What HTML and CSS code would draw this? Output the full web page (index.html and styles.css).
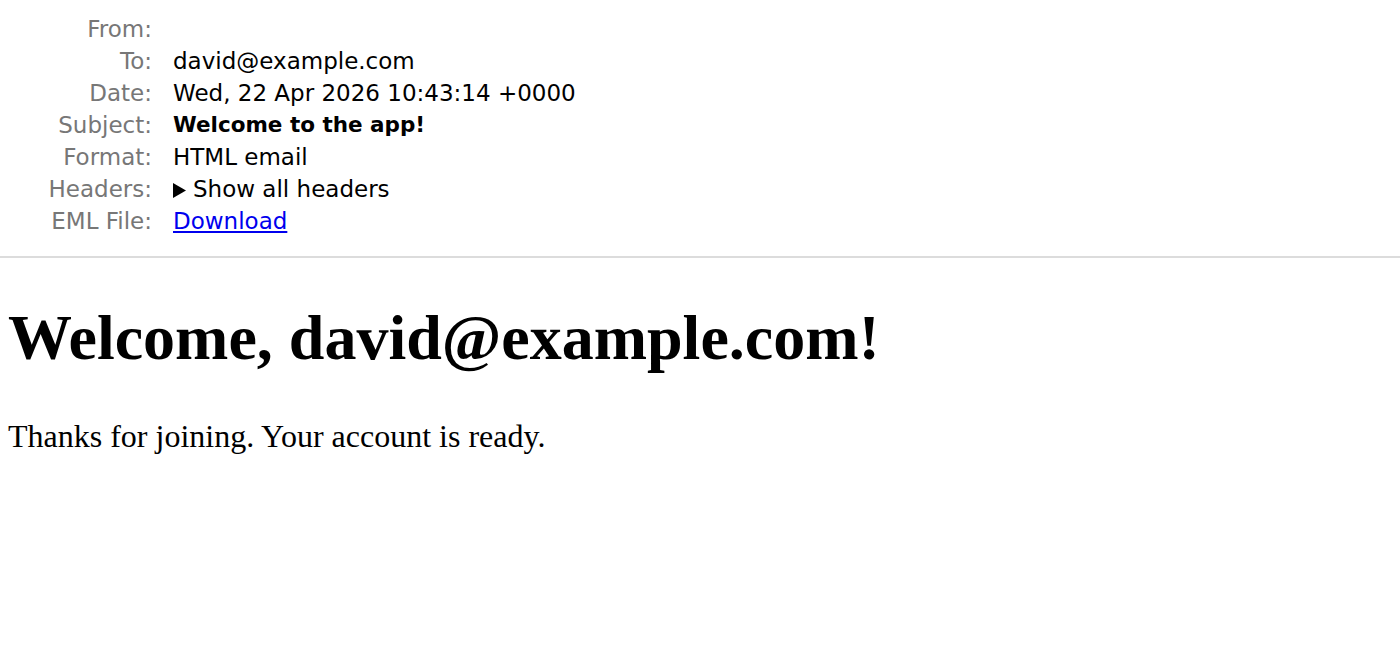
FILE: index.html
```html
<!DOCTYPE html>
<html>
<head>
<meta charset="utf-8">
<link rel="stylesheet" href="styles.css">
</head>
<body>
<header class="meta">
  <dl class="fields">
    <dt>From:</dt><dd></dd>
    <dt>To:</dt><dd>david@example.com</dd>
    <dt>Date:</dt><dd>Wed, 22 Apr 2026 10:43:14 +0000</dd>
    <dt>Subject:</dt><dd class="subject">Welcome to the app!</dd>
    <dt>Format:</dt><dd>HTML email</dd>
    <dt>Headers:</dt><dd><svg class="tri" width="13" height="15" viewBox="0 0 13 15"><polygon points="0,0 13,7.5 0,15" fill="#000"/></svg>Show all headers</dd>
    <dt>EML File:</dt><dd><a href="#" class="link">Download</a></dd>
  </dl>
</header>
<main class="content">
  <h1 class="title">Welcome, david@example.com!</h1>
  <p class="text">Thanks for joining. Your account is ready.</p>
</main>
</body>
</html>
```
FILE: styles.css
```css
html, body {
  margin: 0;
  padding: 0;
  background: #fff;
}
.meta {
  padding: 13px 0 19px;
  border-bottom: 2px solid #dcdcdc;
  font-family: "DejaVu Sans", sans-serif;
  font-size: 23px;
  line-height: 32px;
}
.fields {
  margin: 0;
  display: grid;
  grid-template-columns: 152px 1fr;
  column-gap: 21px;
}
.fields dt {
  text-align: right;
  color: #777;
  min-height: 32px;
  white-space: nowrap;
}
.fields dd {
  margin: 0;
  color: #000;
  min-height: 32px;
  white-space: nowrap;
}
.subject {
  font-weight: bold;
  font-size: 21.5px;
}
.tri {
  margin-right: 7px;
  vertical-align: -1px;
}
.link { color: #0000ee; text-decoration: underline; }
.content {
  padding: 0 8px;
  font-family: "Liberation Serif", serif;
}
.title {
  font-size: 64px;
  font-weight: bold;
  margin: 43px 0;
}
.text {
  font-size: 32px;
  margin: 32px 0;
}
```
